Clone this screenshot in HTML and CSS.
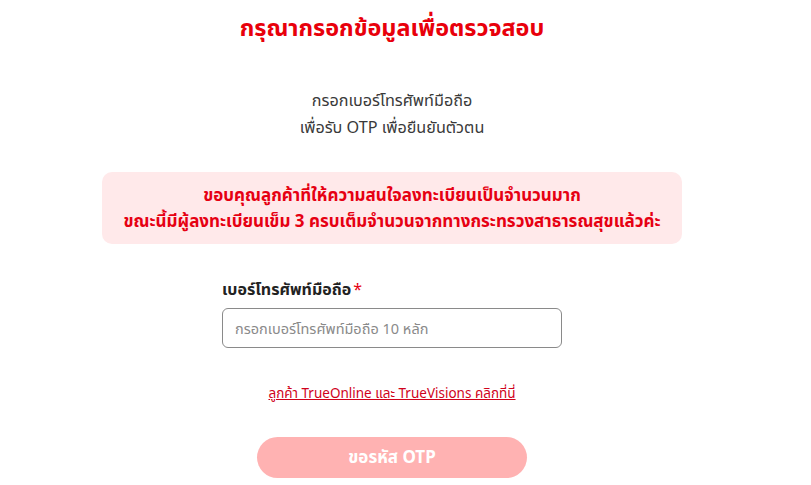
FILE: index.html
```html
<!DOCTYPE html>
<html lang="th">
<head>
<meta charset="utf-8">
<title>OTP</title>
<link rel="stylesheet" href="styles.css">
</head>
<body>
<main class="page">
  <h1 class="title">กรุณากรอกข้อมูลเพื่อตรวจสอบ</h1>
  <p class="subtitle">กรอกเบอร์โทรศัพท์มือถือ<br>เพื่อรับ OTP เพื่อยืนยันตัวตน</p>
  <div class="notice">
    <p>ขอบคุณลูกค้าที่ให้ความสนใจลงทะเบียนเป็นจำนวนมาก</p>
    <p>ขณะนี้มีผู้ลงทะเบียนเข็ม 3 ครบเต็มจำนวนจากทางกระทรวงสาธารณสุขแล้วค่ะ</p>
  </div>
  <form class="form">
    <label class="label" for="phone">เบอร์โทรศัพท์มือถือ<span class="req">*</span></label>
    <input class="input" id="phone" type="text" placeholder="กรอกเบอร์โทรศัพท์มือถือ 10 หลัก">
  </form>
  <a class="link" href="#">ลูกค้า TrueOnline และ TrueVisions คลิกที่นี่</a>
  <button class="btn" type="button">ขอรหัส OTP</button>
</main>
</body>
</html>
```
FILE: styles.css
```css
* { box-sizing: border-box; }
html, body { margin: 0; padding: 0; background: #fff; }
body { font-family: "Noto Sans", "Noto Sans Thai", "Liberation Sans", sans-serif; color: #333; }
.page {
  width: 784px;
  display: flex;
  flex-direction: column;
  align-items: center;
  padding-top: 12px;
}
.title {
  margin: 0;
  color: #e8000b;
  font-size: 23.4px;
  font-weight: 700;
  line-height: 30px;
}
.subtitle {
  margin: 45px 0 0;
  text-align: center;
  font-size: 16.2px;
  line-height: 27px;
  color: #3a3a3a;
}
.notice {
  margin-top: 31px;
  width: 580px;
  height: 72px;
  background: #ffe9ea;
  border-radius: 10px;
  display: flex;
  flex-direction: column;
  justify-content: center;
  align-items: center;
  color: #e60012;
  font-weight: 700;
  font-size: 17px;
  line-height: 26px;
}
.notice p { margin: 0; }
.form {
  margin-top: 34px;
  width: 340px;
  display: flex;
  flex-direction: column;
}
.label {
  font-size: 16px;
  font-weight: 700;
  color: #222;
  line-height: 22px;
}
.req { color: #e60012; font-weight: 400; margin-left: 2px; }
.input {
  margin-top: 8px;
  height: 40px;
  border: 1px solid #8a8a8a;
  border-radius: 6px;
  padding: 0 12px;
  font-family: inherit;
  font-size: 14.5px;
  color: #333;
}
.input::placeholder { color: #8a8a8a; }
.link {
  margin-top: 36px;
  color: #d0021b;
  font-size: 13.5px;
  text-decoration: underline;
  line-height: 18px;
}
.btn {
  margin-top: 35px;
  width: 270px;
  height: 41px;
  border: 0;
  border-radius: 21px;
  background: #ffb2b2;
  color: #fff;
  font-family: inherit;
  font-size: 17px;
  font-weight: 700;
}
```
